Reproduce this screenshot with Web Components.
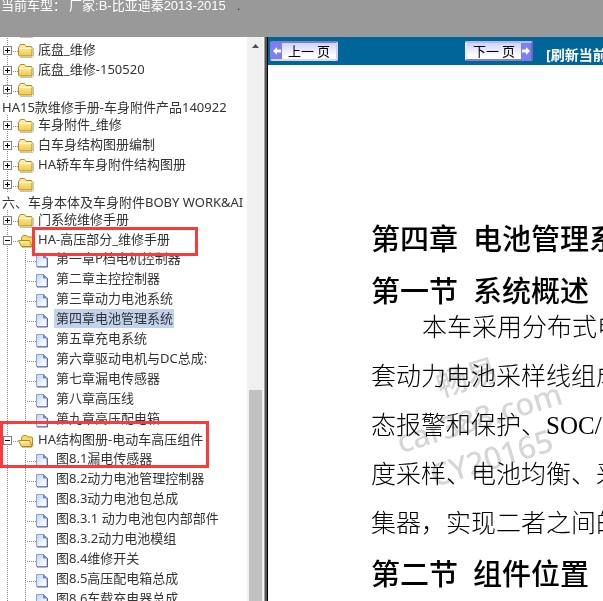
<!DOCTYPE html>
<html lang="zh-CN">
<head>
<meta charset="utf-8">
<title>维修手册</title>
<style>
html, body { margin: 0; height: 100%; }
body { font-family: "Noto Sans", "Noto Sans CJK SC", sans-serif; font-size: 13px; background: #fff; color: #333; overflow: hidden; }
</style>
</head>
<body>
<manual-app>
  <vehicle-bar slot="header"></vehicle-bar>
  <tree-pane slot="nav">
    <tree-node></tree-node>
    <tree-node label="底盘_维修"></tree-node>
    <tree-node label="底盘_维修-150520"></tree-node>
    <tree-node wrap label="HA15款维修手册-车身附件产品140922"></tree-node>
    <tree-node label="车身附件_维修"></tree-node>
    <tree-node label="白车身结构图册编制"></tree-node>
    <tree-node label="HA轿车车身附件结构图册"></tree-node>
    <tree-node wrap label="六、车身本体及车身附件BOBY WORK&amp;AI"></tree-node>
    <tree-node label="门系统维修手册"></tree-node>
    <tree-node open label="HA-高压部分_维修手册" mark="single">
      <tree-leaf label="第一章P档电机控制器"></tree-leaf>
      <tree-leaf label="第二章主控控制器"></tree-leaf>
      <tree-leaf label="第三章动力电池系统"></tree-leaf>
      <tree-leaf label="第四章电池管理系统" selected></tree-leaf>
      <tree-leaf label="第五章充电系统"></tree-leaf>
      <tree-leaf label="第六章驱动电机与DC总成:"></tree-leaf>
      <tree-leaf label="第七章漏电传感器"></tree-leaf>
      <tree-leaf label="第八章高压线"></tree-leaf>
      <tree-leaf label="第九章高压配电箱" last></tree-leaf>
    </tree-node>
    <tree-node open label="HA结构图册-电动车高压组件" mark="double">
      <tree-leaf label="图8.1漏电传感器"></tree-leaf>
      <tree-leaf label="图8.2动力电池管理控制器"></tree-leaf>
      <tree-leaf label="图8.3动力电池包总成"></tree-leaf>
      <tree-leaf label="图8.3.1 动力电池包内部部件"></tree-leaf>
      <tree-leaf label="图8.3.2动力电池模组"></tree-leaf>
      <tree-leaf label="图8.4维修开关"></tree-leaf>
      <tree-leaf label="图8.5高压配电箱总成"></tree-leaf>
      <tree-leaf label="图8.6车载充电器总成"></tree-leaf>
    </tree-node>
  </tree-pane>
  <page-toolbar slot="toolbar"></page-toolbar>
  <manual-page slot="page"></manual-page>
</manual-app>
<script>
const define = (name, html, setup) => {
  const t = document.createElement('template');
  t.innerHTML = html;
  customElements.define(name, class extends HTMLElement {
    constructor() {
      super();
      this.attachShadow({ mode: 'open' }).append(t.content.cloneNode(true));
    }
    connectedCallback() { if (setup) setup(this, this.shadowRoot); }
  });
};

define('manual-app', `
<style>
:host { display: flex; flex-direction: column; height: 100vh; overflow: hidden; }
main { flex: 1; min-height: 0; display: grid; grid-template-columns: 268px minmax(0, 1fr); }
nav { min-height: 0; display: flex; }
section { min-width: 0; min-height: 0; display: flex; flex-direction: column; }
</style>
<slot name="header"></slot>
<main><nav><slot name="nav"></slot></nav>
<section><slot name="toolbar"></slot><slot name="page"></slot></section></main>`);

define('vehicle-bar', `
<style>
:host { display: flex; gap: 3px; flex: none; height: 37px; box-sizing: border-box; background: #999; color: #fff; padding-left: 1px; line-height: 12px; white-space: nowrap; font-family: "Liberation Sans", "Noto Sans CJK SC", sans-serif; }
.dot { color: #333; padding-left: 8px; }
</style>
<span>当前车型：</span><span>厂家:B-比亚迪秦2013-2015</span><span class="dot">.</span>`);

define('tree-pane', `
<style>
:host { display: flex; flex: 1; min-width: 0; min-height: 0; border-right: 1px solid #000; }
.list { flex: 1; min-width: 0; overflow: hidden; }
.rows { margin-top: -17px; }
.bar { flex: none; width: 17px; box-sizing: border-box; background: #f0f0f0; display: grid; grid-template-rows: 17px 336px 1fr; justify-items: center; align-items: center; border-right: 1px solid #f8f8f8; }
.thumb { grid-row: 3; width: 13px; height: 100%; background: #c1c1c1; }
.edge { flex: none; width: 3px; background: linear-gradient(90deg, #a0a0a0 33%, #555 34%); }
</style>
<div class="list"><div class="rows"><slot></slot></div></div>
<div class="bar"><svg width="7" height="4"><path d="M0 4L3.5 0 7 4z" fill="#505050"/></svg><div class="thumb"></div></div>
<div class="edge"></div>`);

const dotsV = 'repeating-linear-gradient(#888 0 1px, transparent 1px 2px)';
const dotsH = 'repeating-linear-gradient(90deg, #888 0 1px, transparent 1px 2px)';

define('tree-node', `
<style>
:host { display: block; position: relative; }
.row { display: flex; align-items: center; height: 20px; white-space: nowrap; position: relative;
  background: ${dotsV} 7px 0 / 1px 100% no-repeat, ${dotsH} 13px 11px / 5px 1px no-repeat; }
button { flex: none; width: 9px; height: 9px; margin: 1px 6px 0 3px; padding: 0; border: 1px solid #808080; background: #fff; border-radius: 0; display: grid; place-items: center; }
button svg { display: block; }
.folder { flex: none; margin-top: 2px; }
.folder .o, :host([open]) .folder .c, :host([open]) .v { display: none; }
:host([open]) .folder .o { display: block; }
a { color: #333; text-decoration: none; line-height: 16px; white-space: nowrap; }
.row a { margin: -3px 0 0 3px; }
:host([wrap]) .row { height: 18px; }
.under { display: block; padding: 1px 0 0 2px; }
.mark { display: none; position: absolute; z-index: 2; box-sizing: border-box; border: 3px solid #f93b3b; pointer-events: none; }
:host([mark]) .mark { display: block; }
:host([mark="single"]) .mark { left: 32px; top: -3px; width: 166px; height: 29px; }
:host([mark="double"]) .mark { left: 0; top: -9px; width: 209px; height: 47px; }
</style>
<div class="row"><button type="button" aria-label="展开或折叠"><svg width="7" height="7"><path d="M1 3h5v1H1z"/><path class="v" d="M3 1h1v5H3z"/></svg></button>
<svg class="folder" width="17" height="16" viewBox="0 0 17 16">
<defs><linearGradient id="g" x2="0" y2="1"><stop stop-color="#fff5b8"/><stop offset="1" stop-color="#f3c842"/></linearGradient></defs>
<g class="c"><path d="M2 14.5h12.5l1-1V5" fill="none" stroke="#aaa" stroke-opacity=".7"/><path d="M.5 4.5l2-3h4l1.5 2h5.5l.5.5v9H1.500l-1-1z" fill="url(#g)" stroke="#b58a20"/><path d="M1.500 5.500h12" stroke="#fff9d5"/></g>
<g class="o"><path d="M4 14.500h9.500l2-3" fill="none" stroke="#aaa" stroke-opacity=".7"/><path d="M3.500 8V4.500l1.500-2h3.500l1.500 1.500h4l.5.5V12l-1 1" fill="#f7d967" stroke="#b58a20"/><path d="M.5 7.500h11l2.500 6H3.500z" fill="url(#g)" stroke="#b58a20"/></g>
</svg></div>
<div class="mark"></div>
<slot></slot>`, (el, root) => {
  const text = el.getAttribute('label');
  if (!text) return;
  const a = document.createElement('a');
  a.href = '#'; a.textContent = text;
  const row = root.querySelector('.row');
  if (el.hasAttribute('wrap')) { a.className = 'under'; row.after(a); } else row.append(a);
});

define('tree-leaf', `
<style>
:host { display: flex; align-items: center; height: 20px; box-sizing: border-box; padding-left: 36px; white-space: nowrap;
  background: ${dotsV} 7px 0 / 1px 100% no-repeat, ${dotsV} 25px 0 / 1px 100% no-repeat, ${dotsH} 27px 11px / 9px 1px no-repeat; }
:host([last]) { background-size: 1px 100%, 1px 11px, 9px 1px; }
svg { flex: none; margin-top: 1px; }
a { color: #333; text-decoration: none; line-height: 19px; margin: -3px 0 0 5px; padding: 0 1px 0 2px; }
:host([selected]) a { background: #c1d2ee; }
</style>
<svg width="13" height="15" viewBox="0 0 13 15">
<defs><linearGradient id="p" x2="1" y2="1"><stop stop-color="#b9d3fb"/><stop offset=".7" stop-color="#f4f8ff"/></linearGradient></defs>
<path d="M.5 1.500h7l3.500 3.500v8.500H.5z" fill="url(#p)" stroke="#8fa3d2"/><path d="M11.500 5v9H1" fill="none" stroke="#5a66a5"/><path d="M7.500 1.500v3.500H11z" fill="#6f88c8" stroke="#6f88c8"/></svg><a href="#"></a>`, (el, root) => {
  root.querySelector('a').textContent = el.getAttribute('label');
});

define('page-button', `
<style>
:host { display: block; flex: none; }
button { display: flex; align-items: center; width: 68px; height: 20px; padding: 0; border: 2px solid; border-color: #8080c4 #d0d0fa #d8d8ff #8080e0; border-radius: 2px; background: linear-gradient(#cfd2fa, #fff 80%); font: 400 13px/16px "Noto Sans CJK SC", sans-serif; color: #000; overflow: hidden; }
:host([next]) button { flex-direction: row-reverse; border-color: #b8b8ec #6868c0 #8080cc #e8e8ff; }
svg { flex: none; }
:host([next]) svg { transform: rotate(180deg); }
span { flex: 1; text-align: center; white-space: nowrap; }
</style>
<button type="button"><svg width="10" height="16"><path d="M0 0h10v16H0z" fill="#7b80f5"/><path d="M1 8l4-4v2.500h4v3H5V12z" fill="#fff"/></svg><span><slot></slot></span></button>`);

define('page-toolbar', `
<style>
:host { display: flex; flex: none; align-items: center; height: 28px; box-sizing: border-box; padding-left: 2px; background: #069; overflow: hidden; }
.next { margin-left: 127px; }
a { flex: none; margin: 8px 0 0 13px; color: #fff; font-size: 14px; font-weight: bold; text-decoration: none; white-space: nowrap; line-height: 16px; }
</style>
<page-button>上一 页</page-button><page-button next class="next">下一 页</page-button><a href="#">[刷新当前页]</a>`);

define('manual-page', `
<style>
:host { display: block; flex: 1; min-height: 0; overflow: hidden; position: relative; background: #fff; color: #000; padding: 148px 0 0 103px; white-space: nowrap; }
h1, h2 { display: flex; gap: 15px; margin: 0; font-size: 29px; line-height: 52px; font-weight: 500; }
p { margin: -14px 0 0; font: 300 25px/49px "Liberation Serif", "Noto Sans CJK SC", serif; }
p span { display: block; }
p span:first-child { padding-left: 51px; }
.stamp { position: absolute; left: 111px; top: 289px; width: 200px; text-align: center; font-size: 31px; line-height: 42px; font-weight: 500; color: #d6d6d6; transform: rotate(-17deg); mix-blend-mode: multiply; }
</style>
<h1><span>第四章</span><span>电池管理系统</span></h1>
<h2><span>第一节</span><span>系统概述</span></h2>
<p><span>本车采用分布式电</span><span>套动力电池采样线组成</span><span>态报警和保护、SOC/</span><span>度采样、电池均衡、采</span><span>集器，实现二者之间的</span></p>
<h2><span>第二节</span><span>组件位置</span></h2>
<div class="stamp">畅易<br>car388.com<br>CY20165</div>`);
</script>
</body>
</html>
